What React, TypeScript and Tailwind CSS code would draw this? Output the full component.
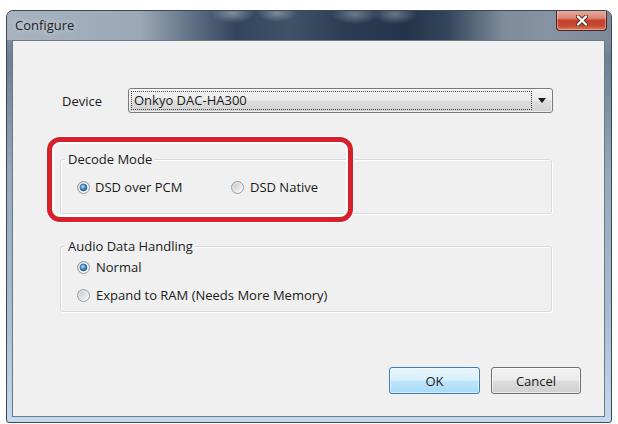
import React from "react";

function Radio({ checked }: { checked: boolean }) {
  return (
    <svg width="13" height="13" viewBox="0 0 13 13" className="shrink-0">
      <defs>
        <linearGradient id={checked ? "rgo1" : "rgo0"} x1="0" y1="0" x2="1" y2="1">
          <stop offset="0" stopColor="#d2d6da" />
          <stop offset="1" stopColor="#fbfbfb" />
        </linearGradient>
        <radialGradient id="rgdot" cx="0.4" cy="0.35" r="0.7">
          <stop offset="0" stopColor="#b9e3fb" />
          <stop offset="0.45" stopColor="#4f98cc" />
          <stop offset="1" stopColor="#1a4f7e" />
        </radialGradient>
        <linearGradient id="rgin0" x1="0" y1="0" x2="1" y2="1">
          <stop offset="0" stopColor="#c9cdd1" />
          <stop offset="1" stopColor="#f3f3f3" />
        </linearGradient>
      </defs>
      <circle cx="6.5" cy="6.5" r="6" fill={`url(#${checked ? "rgo1" : "rgo0"})`} stroke="#949ca5" strokeWidth="1" />
      {checked ? (
        <circle cx="6.5" cy="6.5" r="3.4" fill="url(#rgdot)" stroke="#2c5f8c" strokeWidth="0.7" />
      ) : (
        <circle cx="6.5" cy="6.5" r="3.8" fill="url(#rgin0)" />
      )}
    </svg>
  );
}

export default function App() {
  return (
    <div className="w-[618px] h-[424px] bg-white pl-[6px] pt-[10px] font-['Open_Sans',sans-serif] text-[13px] text-[#1a1a1a] overflow-hidden">
      <div className="w-[606px] h-[413px] flex flex-col border border-[#3b4856] rounded-t-[7px] rounded-b-[3px] overflow-hidden bg-[linear-gradient(180deg,#8e9bab_0%,#6f8094_12%,#97a8ba_40%,#a9bed3_75%,#c6daee_100%)]">
        {/* Title bar */}
        <div className="h-[29px] flex items-start justify-between pl-[8px] pr-[4px] bg-[radial-gradient(ellipse_22px_10px_at_226px_2px,rgba(190,200,212,0.55),transparent),radial-gradient(ellipse_20px_9px_at_270px_2px,rgba(190,200,212,0.5),transparent),radial-gradient(ellipse_24px_10px_at_348px_3px,rgba(190,200,212,0.45),transparent),radial-gradient(ellipse_22px_10px_at_388px_3px,rgba(190,200,212,0.45),transparent),linear-gradient(90deg,#a8b3c0_0%,#9ca8b6_22%,#5d6e83_31%,#33455c_38%,#3f5268_47%,#2c3d53_56%,#24344a_66%,#34465b_73%,#7d8b9b_82%,#8593a3_90%,#7c8a9a_100%)]">
          <span className="mt-[5px] leading-[18px] text-[13px] text-[#1e2226] [text-shadow:0_0_6px_rgba(255,255,255,0.7)]">
            Configure
          </span>
          <div className="-mt-[1px] w-[51px] h-[21px] flex items-center justify-center border border-[#4a2520] border-t-0 rounded-b-[4px] bg-[linear-gradient(180deg,#e9ada0_0%,#dc8676_40%,#c2432c_52%,#c54a31_78%,#dc7a5e_100%)] shadow-[inset_0_0_0_1px_rgba(255,220,210,0.45)]">
            <svg width="12" height="11" viewBox="0 0 12 11">
              <path d="M2 1.5 L10 9.5 M10 1.5 L2 9.5" stroke="#5a2a22" strokeWidth="4" strokeLinecap="round" />
              <path d="M2 1.5 L10 9.5 M10 1.5 L2 9.5" stroke="#ffffff" strokeWidth="2.3" strokeLinecap="round" />
            </svg>
          </div>
        </div>

        {/* Client area */}
        <div className="relative ml-[5px] w-[593px] h-[377px] border border-[#6d7987] bg-[#f0f0f0] flex flex-col">
          {/* Device row */}
          <div className="mt-[47px] flex items-center pl-[49px] h-[25px]">
            <span className="w-[66px] leading-[18px]">Device</span>
            <div className="w-[425px] h-[25px] flex items-center border border-[#7a7a7a] rounded-[3px] bg-[linear-gradient(180deg,#f3f3f3_0%,#ebebeb_48%,#dedede_52%,#d2d2d2_100%)] shadow-[inset_0_0_0_1px_rgba(255,255,255,0.6)]">
              <div className="ml-[2px] w-[401px] h-[19px] border border-dotted border-[#444] flex items-center pl-[2px]">
                <span className="leading-[17px]">Onkyo DAC-HA300</span>
              </div>
              <div className="flex-1 flex items-center justify-center">
                <svg width="8" height="5" viewBox="0 0 8 5">
                  <path d="M0 0 H8 L4 5 Z" fill="#1a1a1a" />
                </svg>
              </div>
            </div>
          </div>

          {/* Decode Mode */}
          <fieldset className="mt-[38px] ml-[47px] w-[492px] h-[63px] border border-[#d5dadf] rounded-[3px] shadow-[inset_1px_1px_0_#fff,1px_1px_0_#fff]">
            <legend className="ml-[4px] px-[3px] leading-[16px] bg-[#f0f0f0]">Decode Mode</legend>
            <div className="flex items-center pl-[16px] pt-[12px] h-[28px]">
              <div className="w-[154px] flex items-center gap-[5px]">
                <Radio checked />
                <span className="leading-[16px]">DSD over PCM</span>
              </div>
              <div className="flex items-center gap-[6px]">
                <Radio checked={false} />
                <span className="leading-[16px]">DSD Native</span>
              </div>
            </div>
          </fieldset>

          {/* Audio Data Handling */}
          <fieldset className="mt-[24px] ml-[47px] w-[492px] h-[74px] border border-[#d5dadf] rounded-[3px] shadow-[inset_1px_1px_0_#fff,1px_1px_0_#fff]">
            <legend className="ml-[4px] px-[3px] leading-[16px] bg-[#f0f0f0]">Audio Data Handling</legend>
            <div className="flex flex-col pl-[16px] pt-[5px] gap-[12px]">
              <div className="flex items-center gap-[6px] h-[16px]">
                <Radio checked />
                <span className="leading-[16px]">Normal</span>
              </div>
              <div className="flex items-center gap-[6px] h-[16px]">
                <Radio checked={false} />
                <span className="leading-[16px]">Expand to RAM (Needs More Memory)</span>
              </div>
            </div>
          </fieldset>

          {/* Buttons */}
          <div className="mt-[55px] flex justify-end gap-[11px] pr-[23px]">
            <button className="w-[91px] h-[27px] flex items-center justify-center border border-[#3c7fb1] rounded-[3px] bg-[linear-gradient(180deg,#e8f5fc_0%,#d9f0fc_48%,#bee6fd_52%,#a9daf4_100%)] shadow-[inset_0_0_0_1px_rgba(255,255,255,0.5)] text-[13px] leading-[16px] font-['Open_Sans',sans-serif] text-[#1a1a1a]">
              OK
            </button>
            <button className="w-[90px] h-[27px] flex items-center justify-center border border-[#707070] rounded-[3px] bg-[linear-gradient(180deg,#f2f2f2_0%,#ebebeb_48%,#dddddd_52%,#cfcfcf_100%)] shadow-[inset_0_0_0_1px_rgba(255,255,255,0.6)] text-[13px] leading-[16px] font-['Open_Sans',sans-serif] text-[#1a1a1a]">
              Cancel
            </button>
          </div>

          {/* Red highlight annotation */}
          <div className="absolute left-[34px] top-[96px] w-[306px] h-[85px] border-[5px] border-[#d6212b] rounded-[13px] shadow-[0_0_0_1px_#fff,inset_0_0_0_2px_#fff] pointer-events-none" />
        </div>
      </div>
    </div>
  );
}
